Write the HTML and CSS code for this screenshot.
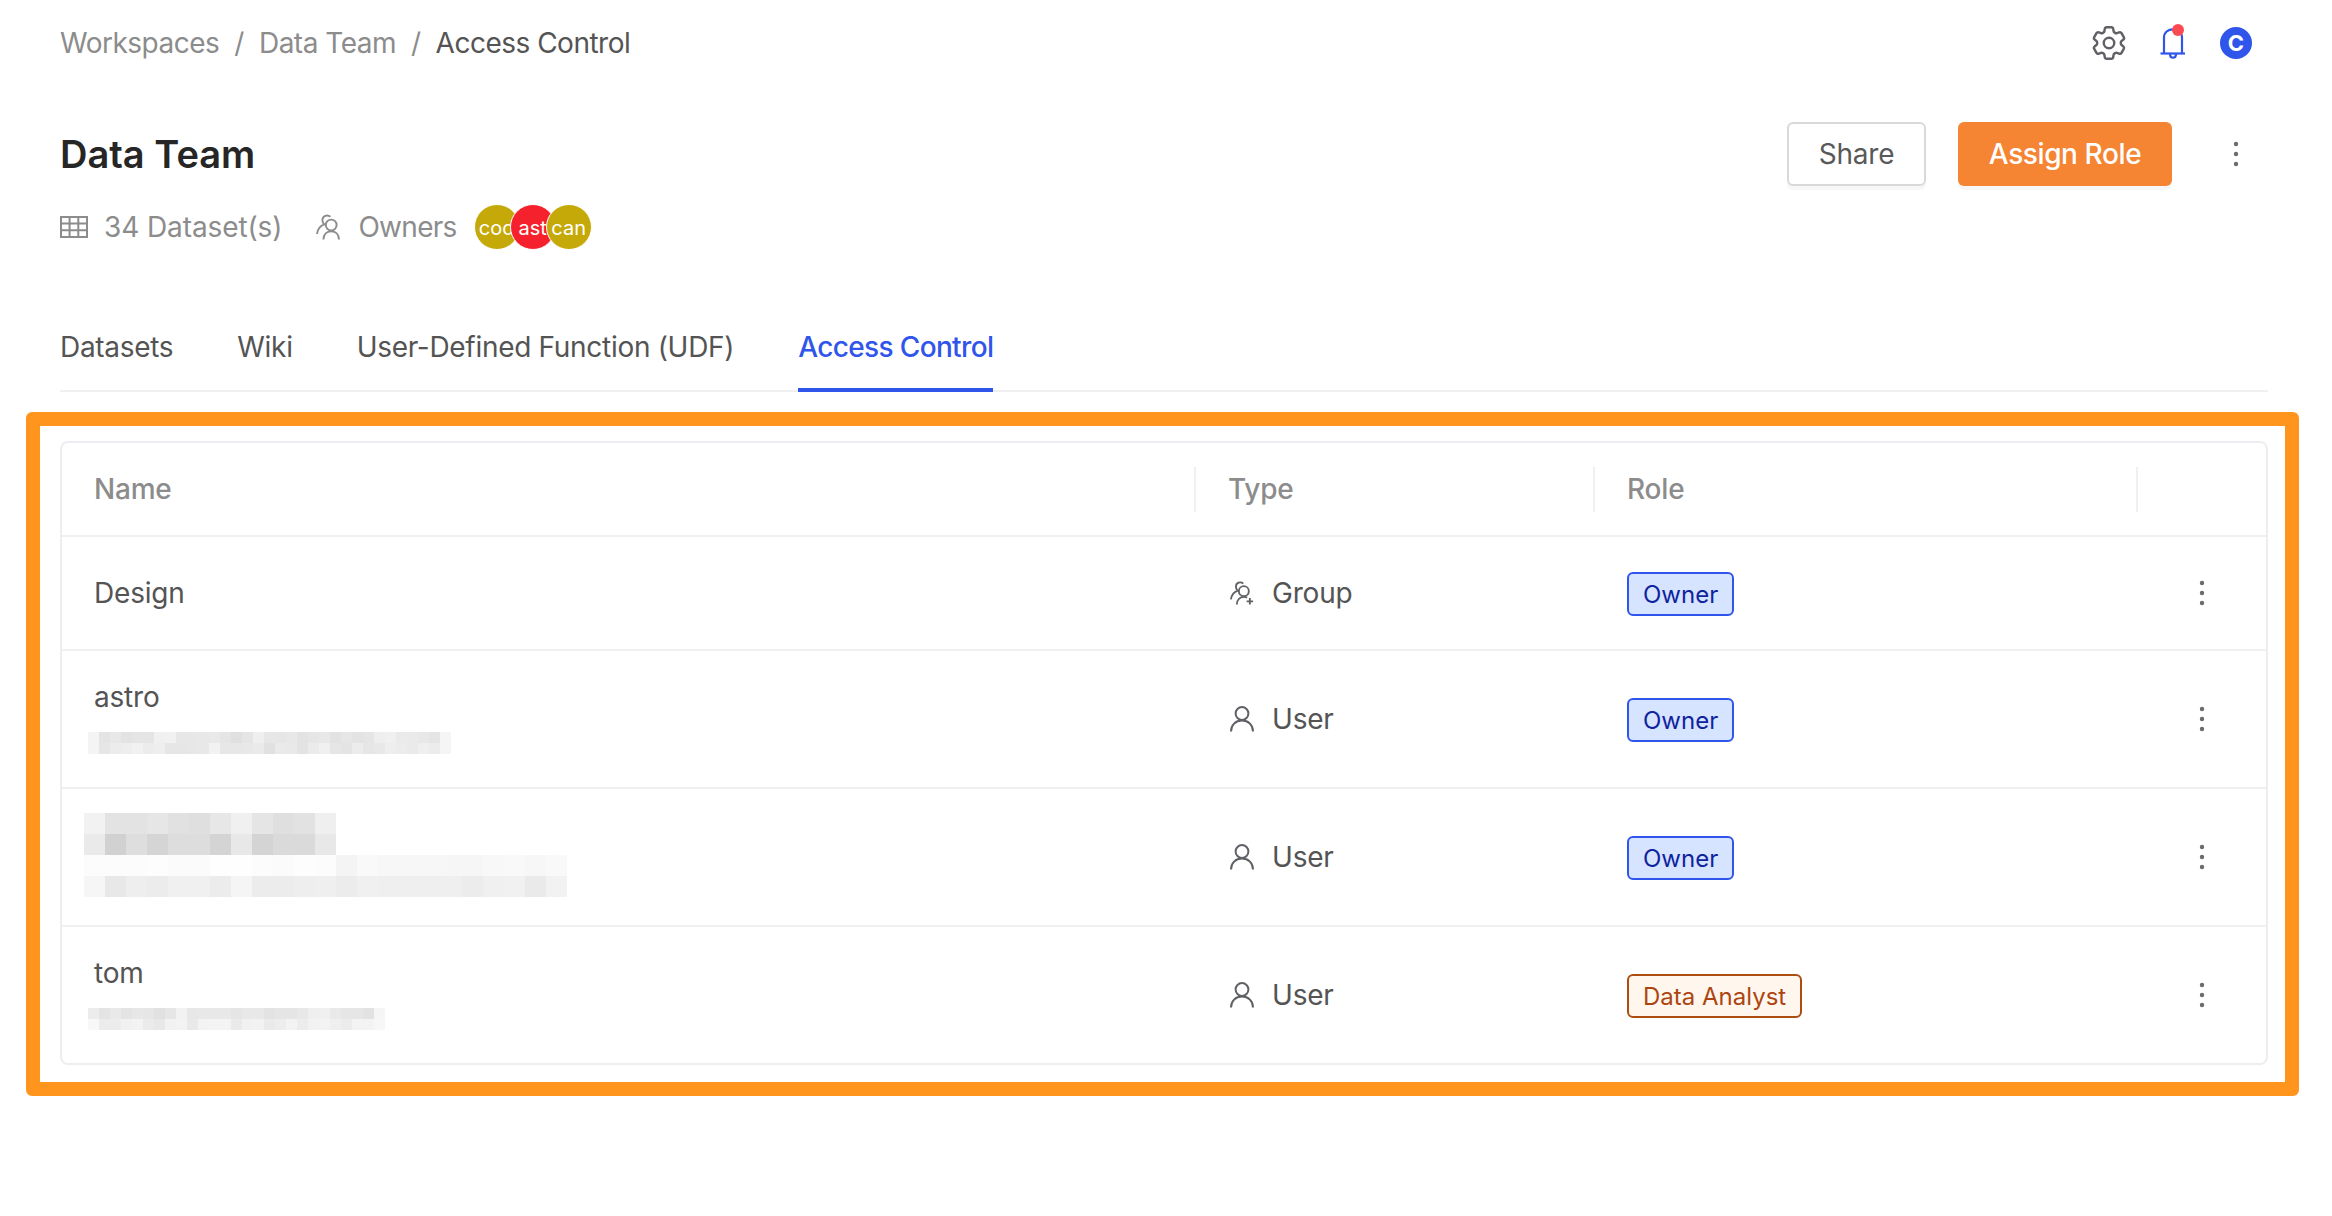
FILE: index.html
```html
<!DOCTYPE html>
<html>

<head>
    <meta charset="utf-8">
    <title>Data Team - Access Control</title>
    <link rel="stylesheet" href="styles.css">
</head>

<body>
    <svg class="icon-defs" width="0" height="0">
        <symbol id="i-user" viewBox="0 0 24 26">
            <circle cx="12" cy="7.5" r="6.4" />
            <path d="M1 25.5C1 19 5.6 14.6 12 14.6S23 19 23 25.5" />
        </symbol>
        <symbol id="i-owners" viewBox="0 0 26 26">
            <circle cx="15.2" cy="11" r="5.4" />
            <path d="M7.4 25.5C7.6 20.5 10.8 17.2 15.2 17.2S22.8 20.5 23 25.5" />
            <path d="M14.4 2.8C11.4.2 6.4 1.8 6.4 6.2 6.4 8 7.2 9.4 8.4 10.4 4.2 11.8 1.6 15.2 1 20" />
        </symbol>
        <symbol id="i-group" viewBox="0 0 26 26">
            <circle cx="15" cy="11" r="5.4" />
            <path d="M7.4 25.5C7.6 20.5 10.8 17.2 15.2 17.2 16.6 17.2 17.6 17.5 18.6 18" />
            <path d="M14.4 2.8C11.4.2 6.4 1.8 6.4 6.2 6.4 8 7.2 9.4 8.4 10.4 4.2 11.8 1.6 15.2 1 20" />
            <path d="M21.5 18.5V25.5M18 22H25" />
        </symbol>
        <symbol id="i-kebab" viewBox="0 0 6 26">
            <circle class="dot" cx="3" cy="3" r="2.2" />
            <circle class="dot" cx="3" cy="13" r="2.2" />
            <circle class="dot" cx="3" cy="23" r="2.2" />
        </symbol>
    </svg>

    <div class="page">
        <div class="topbar">
            <div class="crumbs">
                <span>Workspaces</span>
                <span>/</span>
                <span>Data Team</span>
                <span>/</span>
                <span class="crumb-current">Access Control</span>
            </div>
            <div class="top-icons">
                <svg class="gear" viewBox="0 0 24 24">
                    <path d="M9.594 3.94c.09-.542.56-.94 1.11-.94h2.593c.55 0 1.02.398 1.11.94l.213 1.281c.063.374.313.686.645.87.074.04.147.083.22.127.324.196.72.257 1.075.124l1.217-.456a1.125 1.125 0 011.37.49l1.296 2.247a1.125 1.125 0 01-.26 1.431l-1.003.827c-.293.24-.438.613-.431.992a6.759 6.759 0 010 .255c-.007.378.138.75.43.99l1.005.828c.424.35.534.954.26 1.43l-1.298 2.247a1.125 1.125 0 01-1.369.491l-1.217-.456c-.355-.133-.75-.072-1.076.124a6.57 6.57 0 01-.22.128c-.331.183-.581.495-.644.869l-.213 1.28c-.09.543-.56.941-1.11.941h-2.594c-.55 0-1.02-.398-1.11-.94l-.213-1.281c-.062-.374-.312-.686-.644-.87a6.52 6.52 0 01-.22-.127c-.325-.196-.72-.257-1.076-.124l-1.217.456a1.125 1.125 0 01-1.369-.49l-1.297-2.247a1.125 1.125 0 01.26-1.431l1.004-.827c.292-.24.437-.613.43-.992a6.932 6.932 0 010-.255c.007-.378-.138-.75-.43-.99l-1.004-.828a1.125 1.125 0 01-.26-1.43l1.297-2.247a1.125 1.125 0 011.37-.491l1.216.456c.356.133.751.072 1.076-.124.072-.044.146-.087.22-.128.332-.183.582-.495.644-.869l.214-1.281z" />
                    <circle cx="12" cy="12" r="3" />
                </svg>
                <svg class="bell" viewBox="0 0 26 36">
                    <path d="M4 29.5V13.5C4 8.5 8 5.3 13 5.3S22 8.5 22 13.5V29.5" />
                    <path d="M.5 29.5H25" />
                    <path d="M10 30C10 35 16 35 16 30" />
                    <circle class="bell-dot" cx="18" cy="6" r="6" />
                </svg>
                <span class="me">C</span>
            </div>
        </div>

        <div class="team-head">
            <h1 class="team-name">Data Team</h1>
            <div class="team-actions">
                <button class="btn">Share</button>
                <button class="btn btn-primary">Assign Role</button>
                <svg class="kebab kebab-head"><use href="#i-kebab" /></svg>
            </div>
        </div>

        <div class="team-meta">
            <svg class="grid-icon" viewBox="0 0 28 22">
                <path d="M1 1H27V21H1ZM1 7.6H27M1 14.3H27M9.6 1V21M18.3 1V21" />
            </svg>
            <span class="meta-count">34 Dataset(s)</span>
            <svg class="meta-owner-icon"><use href="#i-owners" /></svg>
            <span class="meta-owner">Owners</span>
            <div class="owner-stack">
                <span class="owner owner-gold">cod</span>
                <span class="owner owner-red">ast</span>
                <span class="owner owner-gold">can</span>
            </div>
        </div>

        <div class="tabs">
            <div class="tab">Datasets</div>
            <div class="tab">Wiki</div>
            <div class="tab">User-Defined Function (UDF)</div>
            <div class="tab tab-active">Access Control</div>
        </div>

        <div class="frame">
            <div class="card">
                <div class="row row-head">
                    <div class="cell">Name</div>
                    <div class="cell cell-sep">Type</div>
                    <div class="cell cell-sep">Role</div>
                    <div class="cell cell-sep"></div>
                </div>

                <div class="row row-group">
                    <div class="cell">Design</div>
                    <div class="cell cell-type"><svg class="type-icon"><use href="#i-group" /></svg>Group</div>
                    <div class="cell cell-role"><span class="badge badge-owner">Owner</span></div>
                    <div class="cell cell-more"><svg class="kebab"><use href="#i-kebab" /></svg></div>
                </div>

                <div class="row">
                    <div class="cell cell-name">
                        <div>astro</div>
                        <canvas class="blur blur-small" data-cell="11"
                            data-shades="f4 e4 e8 e3 e5 e5 f0 f1 e7 e7 e8 e9 e5 e0 e5 ef e7 e6 e8 e3 e6 e8 e2 e6 e3 e5 ee f0 ea ea e8 e5 f5|f4 e6 ec ee f1 ec ee e6 e6 e7 e8 f2 e7 e7 e8 ea e1 ea e9 e3 eb f0 e6 e4 ec e6 e8 ee ec ea ef ec f5"></canvas>
                    </div>
                    <div class="cell cell-type"><svg class="type-icon"><use href="#i-user" /></svg>User</div>
                    <div class="cell cell-role"><span class="badge badge-owner">Owner</span></div>
                    <div class="cell cell-more"><svg class="kebab"><use href="#i-kebab" /></svg></div>
                </div>

                <div class="row">
                    <div class="cell cell-name">
                        <canvas class="blur blur-large" data-cell="21"
                            data-shades="f2 e3 e3 e6 e1 df e7 f0 e5 df e2 ef|ea d1 de d5 dd dd d4 e8 d4 da da e8|fc fc fc fd fb fb fe fe fc fb fd fc f4 f9 f7 f7 f7 f6 f6 f8 f9 f7 f9|f6 e8 ee ec f0 f0 ec f5 ec ec ee ef ec f0 ef ef ef ef ec f0 f1 ea f2"></canvas>
                    </div>
                    <div class="cell cell-type"><svg class="type-icon"><use href="#i-user" /></svg>User</div>
                    <div class="cell cell-role"><span class="badge badge-owner">Owner</span></div>
                    <div class="cell cell-more"><svg class="kebab"><use href="#i-kebab" /></svg></div>
                </div>

                <div class="row row-last">
                    <div class="cell cell-name">
                        <div>tom</div>
                        <canvas class="blur blur-small" data-cell="11"
                            data-shades="ec e4 e9 e4 e7 e6 e1 e6 f2 e7 e8 e8 e8 e5 e8 e8 e3 e5 e5 e8 ef f0 e9 e6 e6 e2 f5|f8 ec ec f1 f3 eb e8 f2 f3 e9 f3 f4 f4 ea f1 f2 ea ed f3 ec f2 f3 ef ec f3 f3 f7"></canvas>
                    </div>
                    <div class="cell cell-type"><svg class="type-icon"><use href="#i-user" /></svg>User</div>
                    <div class="cell cell-role"><span class="badge badge-analyst">Data Analyst</span></div>
                    <div class="cell cell-more"><svg class="kebab"><use href="#i-kebab" /></svg></div>
                </div>
            </div>
        </div>
    </div>

    <script>
        "use strict"

        // the hidden emails are pixelated in the original, redraw them from their grey values
        document.querySelectorAll('canvas.blur').forEach(canvas => {
            const cell = +canvas.dataset.cell;
            const rows = canvas.dataset.shades.split('|').map(r => r.split(' '));
            canvas.width = Math.max(...rows.map(r => r.length)) * cell;
            canvas.height = rows.length * cell;
            const ctx = canvas.getContext('2d');
            rows.forEach((row, y) => row.forEach((shade, x) => {
                ctx.fillStyle = '#' + shade + shade + shade;
                ctx.fillRect(x * cell, y * cell, cell, cell);
            }));
        });
    </script>
</body>

</html>
```

FILE: styles.css
```css
* {
    box-sizing: border-box;
}

body {
    margin: 0;
    background: #fff;
    color: #545454;
    font-family: Inter, 'Noto Sans', sans-serif;
    font-size: 28px;
}

.icon-defs {
    position: absolute;
}

.page {
    padding: 0 64px 0 60px;
}

/* top bar */
.topbar {
    display: flex;
    justify-content: space-between;
    align-items: center;
    height: 86px;
}

.crumbs {
    display: flex;
    gap: 15px;
    color: #8c8c8c;
    letter-spacing: -0.5px;
}

.crumb-current {
    color: #545454;
}

.top-icons {
    display: flex;
    align-items: center;
    margin-right: 16px;
}

.gear {
    width: 42px;
    height: 42px;
    fill: none;
    stroke: #5f6166;
    stroke-width: 1.4;
}

.bell {
    width: 26px;
    height: 36px;
    margin-left: 30px;
    margin-bottom: 2px;
    fill: none;
    stroke: #2f55eb;
    stroke-width: 2.2;
}

.bell-dot {
    fill: #fa4b52;
    stroke: none;
}

.me {
    display: flex;
    justify-content: center;
    align-items: center;
    width: 32px;
    height: 32px;
    margin-left: 34px;
    border-radius: 50%;
    background: #2f55eb;
    color: #fff;
    font-size: 22px;
    font-weight: 700;
}

/* heading */
.team-head {
    display: flex;
    justify-content: space-between;
    align-items: center;
    height: 100px;
    padding-bottom: 36px;
    margin-top: 36px;
}

.team-name {
    margin: 0;
    color: #262626;
    font-size: 38px;
    font-weight: 600;
}

.team-actions {
    display: flex;
    align-items: center;
}

.btn {
    height: 64px;
    width: 139px;
    border: 2px solid #d9d9d9;
    border-radius: 6px;
    background: #fff;
    color: #595959;
    font-family: inherit;
    font-size: 28px;
    letter-spacing: -0.2px;
    box-shadow: 0 4px 0 rgba(0, 0, 0, 0.03);
}

.btn-primary {
    width: 214px;
    margin-left: 32px;
    border: 0;
    background: #f58433;
    color: #fff;
    font-weight: 500;
    letter-spacing: -0.4px;
}

.kebab {
    width: 6px;
    height: 26px;
    fill: #6a6a70;
}

.kebab-head {
    margin-left: 61px;
    margin-right: 29px;
}

.team-meta {
    display: flex;
    align-items: center;
    height: 46px;
    margin-top: -18px;
    margin-bottom: -2px;
    color: #8c8c8c;
}

.grid-icon {
    width: 28px;
    height: 22px;
    fill: none;
    stroke: #8c8c8c;
    stroke-width: 2;
}

.meta-count {
    margin-left: 16px;
    letter-spacing: -0.1px;
}

.meta-owner-icon {
    width: 26px;
    height: 26px;
    margin-left: 34px;
    fill: none;
    stroke: #8c8c8c;
    stroke-width: 1.9;
}

.meta-owner {
    margin-left: 16px;
    letter-spacing: -0.7px;
}

.owner-stack {
    display: flex;
    margin-left: 17px;
}

.owner {
    display: flex;
    justify-content: center;
    align-items: center;
    width: 46px;
    height: 46px;
    margin-right: -10px;
    padding-top: 2px;
    overflow: hidden;
    border: 1px solid #fff;
    border-radius: 50%;
    color: #fff;
    font-size: 20px;
}

.owner-gold {
    background: #c4a909;
}

.owner-red {
    background: #f5222d;
}

/* tabs */
.tabs {
    display: flex;
    gap: 64px;
    margin-top: 76px;
    border-bottom: 2px solid #f0f0f0;
}

.tab {
    margin-bottom: -2px;
    padding-top: 1px;
    padding-bottom: 19px;
    border-bottom: 4px solid transparent;
    line-height: 44px;
    letter-spacing: -0.3px;
}

.tab-active {
    border-bottom-color: #2f55eb;
    color: #2f55eb;
    font-weight: 500;
    letter-spacing: -0.64px;
}

/* table */
.frame {
    margin: 20px -31px 0 -34px;
    padding: 15px 17px 17px 20px;
    border: 14px solid #ff951c;
    border-radius: 6px;
}

.card {
    border: 2px solid #eceef1;
    border-radius: 8px;
}

.row {
    display: grid;
    grid-template-columns: 1132px 399px 543px 1fr;
    align-items: center;
    height: 138px;
    border-bottom: 2px solid #f0f0f0;
    letter-spacing: -0.2px;
}

.row-head {
    height: 94px;
    color: #8c8c8c;
    font-weight: 500;
}

.row-group {
    height: 114px;
}

.row-last {
    height: 136px;
    border-bottom: 0;
}

.cell {
    padding-left: 32px;
}

.cell-sep {
    border-left: 2px solid #f0f0f0;
    height: 45px;
    line-height: 45px;
}

.cell-name {
    display: flex;
    flex-direction: column;
    align-items: flex-start;
}

.cell-type {
    display: flex;
    align-items: center;
    padding-left: 36px;
}

.cell-role {
    display: flex;
    padding-top: 1px;
    padding-left: 34px;
}

.type-icon {
    width: 24px;
    height: 26px;
    margin-right: 18px;
    fill: none;
    stroke: #5f6166;
    stroke-width: 2;
}

.cell-more {
    display: flex;
    justify-content: center;
    padding-left: 1px;
}

.blur {
    display: block;
}

.blur-small {
    margin: 18px 0 4px -6px;
}

.blur-large {
    margin: 0 0 5px -10px;
}

.badge {
    height: 44px;
    padding: 0 14px;
    border: 2px solid;
    border-radius: 6px;
    font-size: 24px;
    line-height: 42px;
    letter-spacing: 0;
}

.badge-owner {
    border-color: #2f55eb;
    background: #d6e4ff;
    color: #10239e;
}

.badge-analyst {
    border-color: #ad4e10;
    background: #fff7ee;
    color: #ad4511;
}
```
